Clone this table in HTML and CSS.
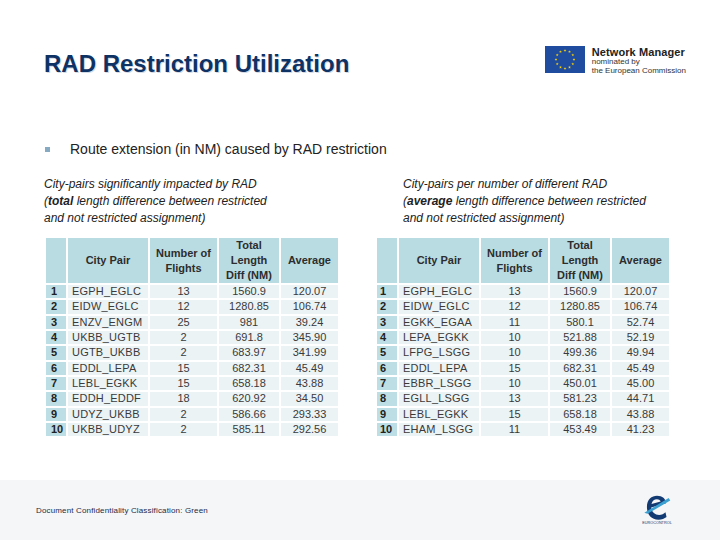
FILE: index.html
```html
<!DOCTYPE html>
<html lang="en">
<head>
<meta charset="utf-8">
<title>RAD Restriction Utilization</title>
<link rel="stylesheet" href="styles.css">
</head>
<body>
<div class="page">
  <header class="top">
    <h1 class="title">RAD Restriction Utilization</h1>
    <div class="nm-logo">
      <svg class="eu-flag" width="40" height="27" viewBox="0 0 40 27">
        <defs>
          <polygon id="star" points="0,-1.5 0.35,-0.48 1.43,-0.46 0.57,0.18 0.88,1.21 0,0.6 -0.88,1.21 -0.57,0.18 -1.43,-0.46 -0.35,-0.48" fill="#ffd500"/>
        </defs>
        <rect width="40" height="27" fill="#1f4c9e"/>
        <use href="#star" x="20" y="4.5"/>
        <use href="#star" x="24.5" y="5.7"/>
        <use href="#star" x="27.8" y="9"/>
        <use href="#star" x="29" y="13.5"/>
        <use href="#star" x="27.8" y="18"/>
        <use href="#star" x="24.5" y="21.3"/>
        <use href="#star" x="20" y="22.5"/>
        <use href="#star" x="15.5" y="21.3"/>
        <use href="#star" x="12.2" y="18"/>
        <use href="#star" x="11" y="13.5"/>
        <use href="#star" x="12.2" y="9"/>
        <use href="#star" x="15.5" y="5.7"/>
      </svg>
      <div class="nm-text">
        <div class="nm-name">Network Manager</div>
        <div class="nm-sub">nominated by</div>
        <div class="nm-sub">the European Commission</div>
      </div>
    </div>
  </header>

  <div class="bullet-line"><span class="bullet"></span><span>Route extension (in NM) caused by RAD restriction</span></div>

  <div class="panels">
    <section class="panel panel-left">
      <p class="caption">City-pairs significantly impacted by RAD<br>(<b>total</b> length difference between restricted<br>and not restricted assignment)</p>
      <table class="rad-table">
        <thead>
          <tr><th class="idx-head"></th><th class="c-pair">City Pair</th><th class="c-num">Number of<br>Flights</th><th class="c-tot">Total<br>Length<br>Diff (NM)</th><th class="c-avg">Average</th></tr>
        </thead>
        <tbody>
          <tr><td class="idx">1</td><td class="pair">EGPH_EGLC</td><td>13</td><td>1560.9</td><td>120.07</td></tr>
          <tr><td class="idx">2</td><td class="pair">EIDW_EGLC</td><td>12</td><td>1280.85</td><td>106.74</td></tr>
          <tr><td class="idx">3</td><td class="pair">ENZV_ENGM</td><td>25</td><td>981</td><td>39.24</td></tr>
          <tr><td class="idx">4</td><td class="pair">UKBB_UGTB</td><td>2</td><td>691.8</td><td>345.90</td></tr>
          <tr><td class="idx">5</td><td class="pair">UGTB_UKBB</td><td>2</td><td>683.97</td><td>341.99</td></tr>
          <tr><td class="idx">6</td><td class="pair">EDDL_LEPA</td><td>15</td><td>682.31</td><td>45.49</td></tr>
          <tr><td class="idx">7</td><td class="pair">LEBL_EGKK</td><td>15</td><td>658.18</td><td>43.88</td></tr>
          <tr><td class="idx">8</td><td class="pair">EDDH_EDDF</td><td>18</td><td>620.92</td><td>34.50</td></tr>
          <tr><td class="idx">9</td><td class="pair">UDYZ_UKBB</td><td>2</td><td>586.66</td><td>293.33</td></tr>
          <tr><td class="idx">10</td><td class="pair">UKBB_UDYZ</td><td>2</td><td>585.11</td><td>292.56</td></tr>
        </tbody>
      </table>
    </section>

    <section class="panel panel-right">
      <p class="caption">City-pairs per number of different RAD<br>(<b>average</b> length difference between restricted<br>and not restricted assignment)</p>
      <table class="rad-table">
        <thead>
          <tr><th class="idx-head"></th><th class="c-pair">City Pair</th><th class="c-num">Number of<br>Flights</th><th class="c-tot">Total<br>Length<br>Diff (NM)</th><th class="c-avg">Average</th></tr>
        </thead>
        <tbody>
          <tr><td class="idx">1</td><td class="pair">EGPH_EGLC</td><td>13</td><td>1560.9</td><td>120.07</td></tr>
          <tr><td class="idx">2</td><td class="pair">EIDW_EGLC</td><td>12</td><td>1280.85</td><td>106.74</td></tr>
          <tr><td class="idx">3</td><td class="pair">EGKK_EGAA</td><td>11</td><td>580.1</td><td>52.74</td></tr>
          <tr><td class="idx">4</td><td class="pair">LEPA_EGKK</td><td>10</td><td>521.88</td><td>52.19</td></tr>
          <tr><td class="idx">5</td><td class="pair">LFPG_LSGG</td><td>10</td><td>499.36</td><td>49.94</td></tr>
          <tr><td class="idx">6</td><td class="pair">EDDL_LEPA</td><td>15</td><td>682.31</td><td>45.49</td></tr>
          <tr><td class="idx">7</td><td class="pair">EBBR_LSGG</td><td>10</td><td>450.01</td><td>45.00</td></tr>
          <tr><td class="idx">8</td><td class="pair">EGLL_LSGG</td><td>13</td><td>581.23</td><td>44.71</td></tr>
          <tr><td class="idx">9</td><td class="pair">LEBL_EGKK</td><td>15</td><td>658.18</td><td>43.88</td></tr>
          <tr><td class="idx">10</td><td class="pair">EHAM_LSGG</td><td>11</td><td>453.49</td><td>41.23</td></tr>
        </tbody>
      </table>
    </section>
  </div>

  <footer class="footer">
    <span class="classification">Document Confidentiality Classification: Green</span>
    <svg class="ec-logo" width="32" height="36" viewBox="0 0 30 34">
      <path d="M5.5 16 C5.5 9 10 5.5 15 5.5 C20 5.5 23.5 8.5 23.5 12.5 L9.5 16.5 C10 21 13 23.5 17 23.5 C19.5 23.5 21.5 22.5 23 21 L24 25.5 C22 27 19.5 28 16.5 28 C9.5 28 5.5 23 5.5 16 Z M9.8 13.2 L18.5 10.8 C17.8 9.5 16.5 8.8 15 8.8 C12.2 8.8 10.4 10.6 9.8 13.2 Z" fill="#123a73"/>
      <path d="M3 21.5 L26 7.5 L27.5 10 L6 22.5 Z" fill="#3aa0d2"/>
      <text x="15" y="32.5" text-anchor="middle" class="ec-word">EUROCONTROL</text>
    </svg>
  </footer>
</div>
</body>
</html>
```

FILE: styles.css
```css
html, body {
  margin: 0;
  padding: 0;
}
body {
  width: 720px;
  height: 540px;
  background: #ffffff;
  font-family: "Liberation Sans", Arial, sans-serif;
  color: #333333;
  overflow: hidden;
}
.page {
  height: 540px;
  display: flex;
  flex-direction: column;
}
.top {
  height: 141px;
  box-sizing: border-box;
  padding: 45px 34px 0 44px;
  display: flex;
  justify-content: space-between;
  align-items: flex-start;
}
.title {
  margin: 5px 0 0;
  font-size: 24px;
  line-height: 28px;
  font-weight: bold;
  color: #0e3263;
  text-shadow: 1px 1px 0 #d3dbe6;
}
.nm-logo {
  display: flex;
  align-items: flex-start;
  gap: 7px;
}
.eu-flag {
  display: block;
  margin-top: 1px;
}
.nm-text {
  color: #222222;
  padding-top: 1px;
}
.nm-name {
  font-size: 11px;
  line-height: 12px;
  font-weight: bold;
  letter-spacing: 0.1px;
}
.nm-sub {
  font-size: 8px;
  line-height: 8.5px;
  color: #333333;
}
.bullet-line {
  height: 17px;
  display: flex;
  align-items: center;
  padding-left: 45px;
  font-size: 14px;
  line-height: 17px;
  color: #222222;
}
.bullet {
  width: 5px;
  height: 5px;
  background: #86aac2;
  margin-right: 20px;
}
.panels {
  display: flex;
  margin-top: 18px;
}
.panel-left {
  width: 331px;
  padding-left: 44px;
}
.panel-right {
  width: 300px;
}
.panel-right .caption {
  padding-left: 28px;
}
.caption {
  margin: 0;
  font-size: 12px;
  line-height: 17px;
  font-style: italic;
  color: #222222;
}
.caption b {
  font-weight: bold;
}
.rad-table {
  margin-top: 9px;
  border-collapse: separate;
  border-spacing: 2px;
  font-size: 11px;
}
.rad-table th {
  background: #b9dce3;
  color: #2d2d2d;
  font-weight: bold;
  font-size: 11px;
  line-height: 15px;
  height: 45px;
  padding: 0;
  text-align: center;
  vertical-align: middle;
}
.rad-table .idx-head { width: 20px; }
.rad-table .c-pair { width: 80px; }
.rad-table .c-num { width: 67px; }
.rad-table .c-tot { width: 60px; }
.rad-table .c-avg { width: 57px; }
.rad-table td {
  background: #ecf3f5;
  color: #3a3a3a;
  height: 13.33px;
  line-height: 13px;
  padding: 0;
  text-align: center;
  white-space: nowrap;
}
.rad-table td.idx {
  background: #bddee4;
  color: #222222;
  font-weight: bold;
  text-align: left;
  padding-left: 5px;
}
.panel-right .rad-table td.idx {
  padding-left: 3px;
}
.rad-table td.pair {
  text-align: left;
  padding-left: 4px;
  letter-spacing: 0.2px;
}
.footer {
  margin-top: auto;
  height: 60px;
  background: #f5f6f7;
  display: flex;
  align-items: center;
  justify-content: space-between;
  padding: 0 47px 0 36px;
}
.classification {
  font-size: 8px;
  color: #1d2b46;
  letter-spacing: 0.15px;
}
.ec-logo {
  display: block;
  margin-top: -4px;
}
.ec-word {
  font-family: "Liberation Sans", Arial, sans-serif;
  font-size: 3.6px;
  fill: #123a73;
}
```
